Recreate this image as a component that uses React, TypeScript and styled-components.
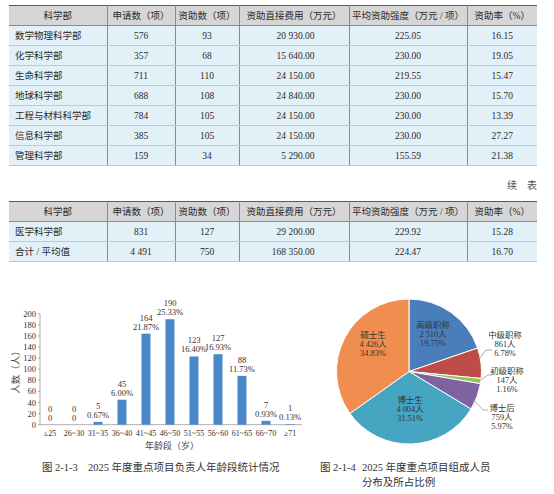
import styled, { createGlobalStyle } from 'styled-components'

const GlobalStyle = createGlobalStyle`
  body {
    margin: 0;
    background: #fff;
    font-family: "Liberation Serif", "Noto Sans CJK SC", serif;
    color: #2b2b2b;
  }
`;

const FONT = '"Liberation Serif", "Noto Sans CJK SC", serif';

const Page = styled.div`
  width: 554px;
  height: 494px;
  padding: 5px 0 0 9px;
  box-sizing: border-box;
  overflow: hidden;
`;

const Table = styled.table`
  width: 528px;
  border-collapse: collapse;
  table-layout: fixed;
  font-size: 9.5px;
  line-height: 12px;
  border-top: 1.5px solid #5a5a5a;
  border-bottom: 1.5px solid #5a5a5a;
`;

const HeadCell = styled.th`
  height: 19px;
  padding: 0;
  font-weight: normal;
  background: #d6d6d6;
  text-align: center;
  color: #2b2b2b;
  border-left: 1px solid #8a8a8a;
  border-bottom: 1px solid #8a8a8a;
  &:first-child { border-left: none; }
`;

type CellProps = { $align: 'left' | 'center' | 'right' }

const Cell = styled.td<CellProps>`
  height: 19px;
  padding: ${p => p.$align === 'left' ? '0 0 0 6px' : p.$align === 'right' ? '0 34px 0 0' : '0'};
  background: #e2f1f8;
  text-align: ${p => p.$align};
  border-left: 1px solid #8a8a8a;
  border-bottom: 1px solid #bccad1;
  white-space: nowrap;
  &:first-child { border-left: none; }
`;

const ContinueNote = styled.div`
  width: 528px;
  height: 35px;
  padding-top: 13px;
  box-sizing: border-box;
  text-align: right;
  font-size: 10px;
  line-height: 14px;
  color: #555;
`;

const ChartRow = styled.div`
  display: flex;
  margin: 30px 0 0 -9px;
`;

const Figure = styled.div<{ $width: number }>`
  width: ${p => p.$width}px;
  display: flex;
  flex-direction: column;
`;

const Caption = styled.div<{ $pad: number; $gap: number }>`
  display: flex;
  gap: ${p => p.$gap}px;
  margin-top: 8px;
  padding-left: ${p => p.$pad}px;
  font-size: 10.5px;
  line-height: 15px;
  color: #333;
  white-space: nowrap;
`;

const headers = ['科学部', '申请数（项）', '资助数（项）', '资助直接费用（万元）', '平均资助强度（万元 / 项）', '资助率（%）'];
const colWidths = [98, 68, 64, 110, 118, 70];
const aligns: CellProps['$align'][] = ['left', 'center', 'center', 'right', 'center', 'center'];

const rows1 = [
  ['数学物理科学部', '576', '93', '20 930.00', '225.05', '16.15'],
  ['化学科学部', '357', '68', '15 640.00', '230.00', '19.05'],
  ['生命科学部', '711', '110', '24 150.00', '219.55', '15.47'],
  ['地球科学部', '688', '108', '24 840.00', '230.00', '15.70'],
  ['工程与材料科学部', '784', '105', '24 150.00', '230.00', '13.39'],
  ['信息科学部', '385', '105', '24 150.00', '230.00', '27.27'],
  ['管理科学部', '159', '34', '5 290.00', '155.59', '21.38'],
];

const rows2 = [
  ['医学科学部', '831', '127', '29 200.00', '229.92', '15.28'],
  ['合计 / 平均值', '4 491', '750', '168 350.00', '224.47', '16.70'],
];

const DataTable = ({ rows }: { rows: string[][] }) => (
  <Table>
    <colgroup>
      {colWidths.map((w, i) => <col key={i} style={{ width: w }} />)}
    </colgroup>
    <thead>
      <tr>{headers.map(h => <HeadCell key={h}>{h}</HeadCell>)}</tr>
    </thead>
    <tbody>
      {rows.map(r => (
        <tr key={r[0]}>
          {r.map((c, i) => <Cell key={i} $align={aligns[i]}>{c}</Cell>)}
        </tr>
      ))}
    </tbody>
  </Table>
);

// bar chart
const ages = [
  { label: '≤25', n: 0, pct: '0' },
  { label: '26~30', n: 0, pct: '0' },
  { label: '31~35', n: 5, pct: '0.67%' },
  { label: '36~40', n: 45, pct: '6.00%' },
  { label: '41~45', n: 164, pct: '21.87%' },
  { label: '46~50', n: 190, pct: '25.33%' },
  { label: '51~55', n: 123, pct: '16.40%' },
  { label: '56~60', n: 127, pct: '16.93%' },
  { label: '61~65', n: 88, pct: '11.73%' },
  { label: '66~70', n: 7, pct: '0.93%' },
  { label: '≥71', n: 1, pct: '0.13%' },
];

const BASE = 132.7;
const SCALE = 111 / 200;

const AgeChart = () => (
  <svg width={310} height={160} fontFamily={FONT}>
    <text transform="translate(19 78) rotate(-90)" fontSize={9.5} textAnchor="middle" fill="#444">人数（人）</text>
    {Array.from({ length: 11 }, (_, i) => {
      const y = BASE - i * 20 * SCALE;
      return (
        <g key={i}>
          <text x={36} y={y + 3} fontSize={8.5} textAnchor="end" fill="#333">{i * 20}</text>
          <line x1={38} x2={40} y1={y} y2={y} stroke="#999" strokeWidth={0.8} />
        </g>
      );
    })}
    <line x1={40} x2={40} y1={BASE - 200 * SCALE} y2={BASE} stroke="#999" strokeWidth={0.8} />
    <line x1={40} x2={302} y1={BASE} y2={BASE} stroke="#999" strokeWidth={0.8} />
    {ages.map((a, i) => {
      const cx = 50 + i * 24;
      const h = a.n * SCALE;
      const top = BASE - h;
      return (
        <g key={a.label}>
          {h > 0 && <rect x={cx - 4.5} y={top} width={9} height={h} fill="#4a88c7" />}
          <text x={cx} y={top - 13} fontSize={8.5} textAnchor="middle" fill="#333">{a.n}</text>
          <text x={cx} y={top - 4} fontSize={8.5} textAnchor="middle" fill="#333">{a.pct}</text>
          <text x={cx} y={144} fontSize={8} textAnchor="middle" fill="#333">{a.label}</text>
        </g>
      );
    })}
    <text x={172} y={157} fontSize={9} textAnchor="middle" fill="#444">年龄段（岁）</text>
  </svg>
);

// pie chart
const members = [
  { name: '高级职称', n: '2 510人', pct: 19.75, color: '#4a7ebb' },
  { name: '中级职称', n: '861人', pct: 6.78, color: '#be4d4a' },
  { name: '初级职称', n: '147人', pct: 1.16, color: '#98c15e' },
  { name: '博士后', n: '759人', pct: 5.97, color: '#7e63a0' },
  { name: '博士生', n: '4 004人', pct: 31.51, color: '#46a5c0' },
  { name: '硕士生', n: '4 426人', pct: 34.83, color: '#f08d4f' },
];

const CX = 89;
const CY = 79.5;
const R = 72.5;

const point = (deg: number, r: number) => {
  const a = (deg - 90) * Math.PI / 180;
  return [CX + r * Math.cos(a), CY + r * Math.sin(a)];
};

const labelPos: { x: number; y: number }[] = [
  { x: 113, y: 36 },
  { x: 185, y: 46 },
  { x: 187, y: 82 },
  { x: 182, y: 119 },
  { x: 90, y: 111 },
  { x: 53, y: 46 },
];

const leaders = ['', '157,70 166,58 172,58', '161,88 168,83 172,83', '153,107 163,118 168,118', '', ''];

const MemberPie = () => {
  let start = 0;
  return (
    <svg width={234} height={160} fontFamily={FONT}>
      {members.map(m => {
        const end = start + m.pct * 3.6;
        const [x1, y1] = point(start, R);
        const [x2, y2] = point(end, R);
        const large = end - start > 180 ? 1 : 0;
        start = end;
        return (
          <path
            key={m.name}
            d={`M${CX},${CY} L${x1},${y1} A${R},${R} 0 ${large} 1 ${x2},${y2} Z`}
            fill={m.color}
            stroke="#fff"
            strokeWidth={1}
          />
        );
      })}
      {leaders.map((l, i) => l && <polyline key={i} points={l} fill="none" stroke="#888" strokeWidth={0.7} />)}
      {members.map((m, i) => (
        <text key={m.name} x={labelPos[i].x} y={labelPos[i].y} fontSize={8.4} textAnchor="middle" fill="#333">
          <tspan x={labelPos[i].x}>{m.name}</tspan>
          <tspan x={labelPos[i].x} dy={9}>{m.n}</tspan>
          <tspan x={labelPos[i].x} dy={9}>{m.pct.toFixed(2)}%</tspan>
        </text>
      ))}
    </svg>
  );
};

const App = () => (
  <>
    <GlobalStyle />
    <Page>
      <DataTable rows={rows1} />
      <ContinueNote>续　表</ContinueNote>
      <DataTable rows={rows2} />
      <ChartRow>
        <Figure $width={320}>
          <AgeChart />
          <Caption $pad={42} $gap={10}>
            <span>图 2-1-3</span>
            <span>2025 年度重点项目负责人年龄段统计情况</span>
          </Caption>
        </Figure>
        <Figure $width={234}>
          <MemberPie />
          <Caption $pad={-2} $gap={6}>
            <span>图 2-1-4</span>
            <span>2025 年度重点项目组成人员<br />分布及所占比例</span>
          </Caption>
        </Figure>
      </ChartRow>
    </Page>
  </>
);

export default App;
